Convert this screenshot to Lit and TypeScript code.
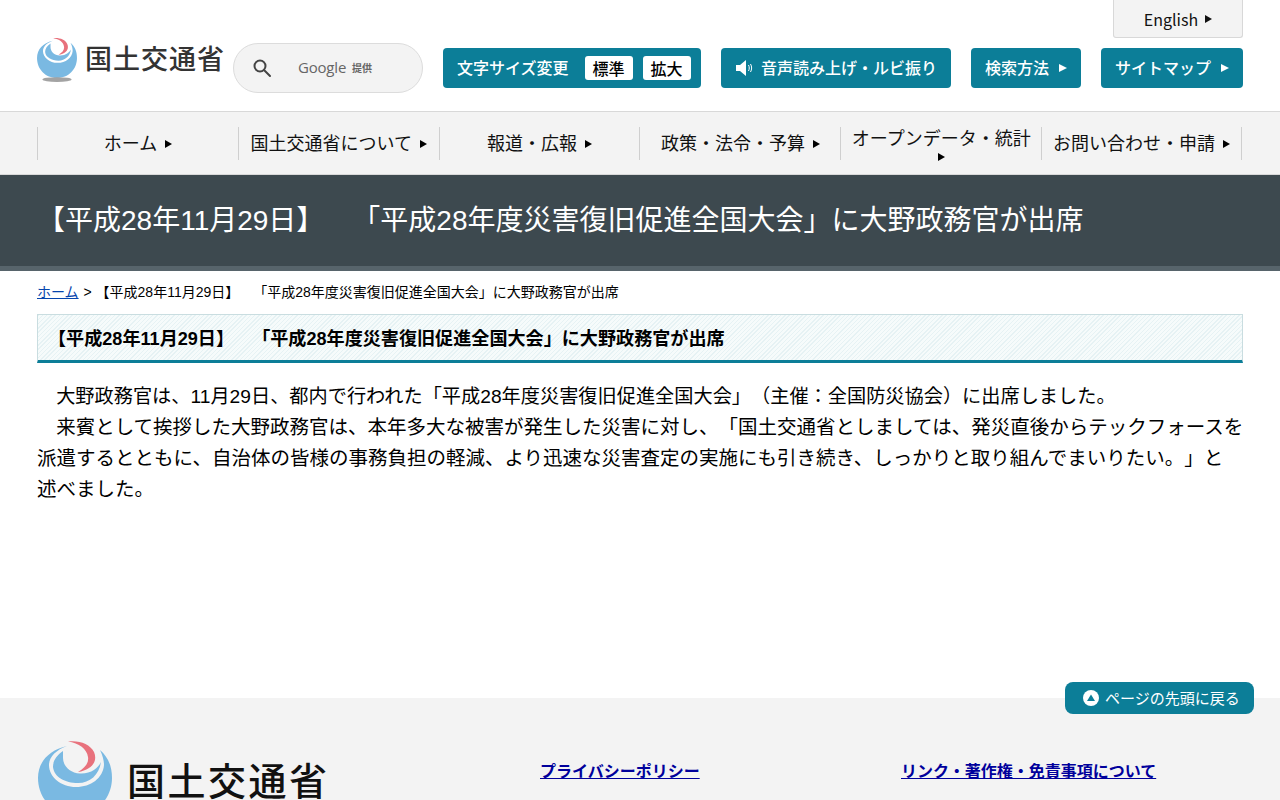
import { LitElement, html, css, svg } from "lit";
import { customElement } from "lit/decorators.js";

const markShapes = svg`
  <path fill="#7ab9e2" d="M29 5C11 9 0 21 0 37c0 21 16 37 37 37s37-16 37-37c0-12-4-21-12-28 3 6 4 11 4 15-1 13-13 22-28 22S11 36 11 24c0-8 7-15 18-19Z"/>
  <path fill="#7ab9e2" d="M25 10c-7 5-10 10-10 16 1 10 12 16 25 16 12 0 21-8 23-21-3 6-10 12-21 11.500C32 32 25 25 25 17c0-3 0-5 0-7Z"/>
  <path fill="#e8717c" d="M30 .5C41-1 52 3 56 11c4 9-2 18-16 20 7-4 11-9 10-15C49 8 41 2 30 .5Z"/>`;

const tri = html`<i class="tri"></i>`;

@customElement("app-root")
export class AppRoot extends LitElement {
  static styles = css`
    :host {
      display: block;
      height: 800px;
      overflow: hidden;
      position: relative;
      font-family: "Liberation Sans", "Noto Sans CJK JP", sans-serif;
      text-spacing-trim: space-all;
      color: #000;
      background: #fff;
    }
    * { box-sizing: border-box; }
    .noto { font-family: "Noto Sans CJK JP", sans-serif; }
    .tri {
      display: inline-block;
      width: 0;
      height: 0;
      border-left: 7px solid currentColor;
      border-top: 4px solid transparent;
      border-bottom: 4px solid transparent;
      font-style: normal;
      vertical-align: 2px;
    }
    header {
      height: 112px;
      border-bottom: 1px solid #d8d8d8;
      padding: 0 37px;
      display: flex;
      flex-direction: column;
      align-items: flex-end;
    }
    .english {
      width: 130px;
      height: 38px;
      background: #f3f3f3;
      border: 1px solid #d8d8d8;
      border-top: 0;
      border-radius: 0 0 3px 3px;
      display: flex;
      align-items: center;
      justify-content: center;
      gap: 7px;
      font-size: 16px;
      color: #111;
    }
    .head-row {
      align-self: stretch;
      height: 73px;
      display: flex;
      align-items: flex-start;
    }
    .logo {
      display: flex;
      align-items: flex-start;
      width: 196px;
      height: 46px;
      flex: none;
    }
    .mini { width: 40px; height: 44px; flex: none; }
    .logo span {
      font-size: 27px;
      font-weight: 500;
      line-height: 40px;
      color: #333;
      letter-spacing: 1px;
      white-space: nowrap;
      margin-left: 8px;
    }
    .search {
      width: 190px;
      height: 50px;
      margin-top: 5px;
      border: 1px solid #dcdcdc;
      border-radius: 25px;
      background: #f3f3f3;
      display: flex;
      align-items: center;
      padding: 0 0 2px 18px;
      flex: none;
    }
    .search svg { width: 20px; height: 20px; flex: none; margin-top: 2px; }
    .google {
      margin-left: 26px;
      font: 15px "Open Sans", sans-serif;
      color: #666;
      letter-spacing: -0.2px;
    }
    .prov {
      margin-left: 6px;
      font-size: 10px;
      font-weight: 700;
      color: #666;
    }
    .tools {
      display: flex;
      gap: 20px;
      margin-left: 20px;
      margin-top: 10px;
    }
    .btn {
      height: 40px;
      background: #0c7e98;
      color: #fff;
      border-radius: 4px;
      display: flex;
      align-items: center;
      justify-content: center;
      font-size: 16px;
      font-weight: 500;
      gap: 10px;
      white-space: nowrap;
      padding-bottom: 2px;
    }
    .btn .tri { vertical-align: baseline; margin-top: 2px; border-left-width: 8px; border-top-width: 4.500px; border-bottom-width: 4.500px; }
    .size { width: 258px; gap: 10px; justify-content: flex-start; padding-left: 14px; }
    .size > span:first-child { margin-right: 6px; }
    .chip {
      width: 48px;
      height: 24px;
      background: #fff;
      color: #000;
      border-radius: 3px;
      display: flex;
      align-items: center;
      justify-content: center;
      margin-top: 2px;
      padding-bottom: 1px;
    }
    .voice { width: 230px; gap: 8px; }
    .voice svg { width: 18px; height: 18px; flex: none; margin-top: 2px; }
    .how { width: 110px; }
    .map { width: 142px; }

    nav {
      height: 63px;
      background: #f3f3f3;
      padding: 15px 38px 0 37px;
      display: grid;
      grid-template-columns: repeat(6, 1fr);
      align-items: start;
      border-bottom: 1px solid #d9d9d9;
    }
    .item {
      height: 33px;
      border-left: 1px solid #cfcfcf;
      font-size: 18px;
      line-height: 25px;
      color: #111;
      text-align: center;
      display: block;
      padding: 3px 6px 0;
    }
    .item:last-child { border-right: 1px solid #cfcfcf; }
    .item .tri { margin-left: 8px; color: #000; }
    .item.wrap { padding-top: 0; line-height: 21px; }
    .item.wrap .tri { display: block; margin: 5px auto 0; position: relative; left: 0; }

    .title {
      height: 96px;
      background: #3d494f;
      border-bottom: 5px solid #57646b;
      color: #fff;
      font-size: 28px;
      line-height: 1.3;
      padding: 28px 37px 0;
      white-space: nowrap;
    }
    .crumb {
      padding: 13px 37px 0;
      font-size: 14px;
      line-height: 17px;
      white-space: pre;
    }
    .crumb a { color: #0645ad; margin-right: 1px; }
    h2 {
      margin: 13px 37px 0;
      height: 49px;
      border: 1px solid #c9dde0;
      border-bottom: 3px solid #0c7e98;
      background: repeating-linear-gradient(135deg, #e6f2f4 0 1px, #f6fbfb 1px 3px);
      font-size: 18.100px;
      line-height: 48px;
      padding-left: 10px;
      white-space: pre;
    }
    .body {
      margin: 18px 37px 0;
      font-size: 19.200px;
      line-height: 31px;
    }
    .body p { margin: 0; text-indent: 1em; }
    .body p + p { font-size: 19.500px; text-indent: 19.200px; margin-right: -4px; }
    footer {
      position: absolute;
      left: 0;
      right: 0;
      top: 698px;
      height: 200px;
      background: #f3f3f3;
    }
    .foot-row { display: flex; padding: 0 37px; }
    .foot-logo { display: flex; gap: 15px; width: 503px; flex: none; padding-top: 43px; padding-left: 1px; }
    .mark { width: 74px; height: 74px; flex: none; }
    .foot-logo span {
      font-size: 38px;
      font-weight: 500;
      line-height: 44px;
      letter-spacing: 2.500px;
      color: #111;
      margin-top: 16px;
      white-space: nowrap;
    }
    .foot-links {
      padding-top: 61px;
      width: 361px;
      flex: none;
      font-size: 16px;
      font-weight: 700;
      line-height: 22px;
    }
    .foot-links a { color: #00009c; }
    .top {
      position: absolute;
      left: 1065px;
      top: 682px;
      width: 189px;
      height: 32px;
      background: #0c7e98;
      border-radius: 8px;
      color: #fff;
      font-size: 15px;
      display: flex;
      align-items: center;
      gap: 6px;
      padding: 0 0 2px 18px;
      white-space: nowrap;
    }
    .top svg { width: 16px; height: 16px; flex: none; margin-top: 2px; }
  `;

  render() {
    const t = "【平成28年11月29日】　「平成28年度災害復旧促進全国大会」に大野政務官が出席";
    return html`
      <header class="noto">
        <div class="english">English ${tri}</div>
        <div class="head-row">
          <div class="logo">
            <svg class="mini" viewBox="0 0 74 81.500" aria-hidden="true">
              ${markShapes}
              <ellipse cx="37" cy="77" rx="27" ry="4.500" fill="#a3a3a3"/>
            </svg>
            <span>国土交通省</span>
          </div>
          <div class="search">
            <svg viewBox="0 0 20 20" fill="none" stroke="#444" stroke-width="2"><circle cx="8" cy="8" r="5.500"/><path d="M12 12l6 6" stroke-linecap="round"/></svg>
            <span class="google">Google</span><span class="prov">提供</span>
          </div>
          <div class="tools">
            <div class="btn size"><span>文字サイズ変更</span><span class="chip">標準</span><span class="chip">拡大</span></div>
            <div class="btn voice">
              <svg viewBox="0 0 18 18"><path fill="#fff" d="M1 6h4l6-5v16l-6-5H1z"/><path fill="none" stroke="#fff" stroke-width="1" d="M13.500 6c1 2 1 4 0 6M15.500 5c1.500 2.500 1.500 5.500 0 8"/></svg>
              <span>音声読み上げ・ルビ振り</span>
            </div>
            <div class="btn how">検索方法 ${tri}</div>
            <div class="btn map">サイトマップ ${tri}</div>
          </div>
        </div>
      </header>
      <nav class="noto">
        <div class="item">ホーム${tri}</div>
        <div class="item">国土交通省について${tri}</div>
        <div class="item">報道・広報${tri}</div>
        <div class="item">政策・法令・予算${tri}</div>
        <div class="item wrap">オープンデータ・統計${tri}</div>
        <div class="item">お問い合わせ・申請${tri}</div>
      </nav>
      <div class="title">${t}</div>
      <div class="crumb"><a href="#">ホーム</a> &gt; ${t}</div>
      <h2>${t}</h2>
      <div class="body">
        <p>大野政務官は、11月29日、都内で行われた「平成28年度災害復旧促進全国大会」（主催：全国防災協会）に出席しました。</p>
        <p>来賓として挨拶した大野政務官は、本年多大な被害が発生した災害に対し、「国土交通省としましては、発災直後からテックフォースを派遣するとともに、自治体の皆様の事務負担の軽減、より迅速な災害査定の実施にも引き続き、しっかりと取り組んでまいりたい。」と<br>述べました。</p>
      </div>
      <footer class="noto">
        <div class="foot-row">
          <div class="foot-logo">
            <svg class="mark" viewBox="0 0 74 74" aria-hidden="true">${markShapes}</svg>
            <span>国土交通省</span>
          </div>
          <div class="foot-links"><a href="#">プライバシーポリシー</a></div>
          <div class="foot-links"><a href="#">リンク・著作権・免責事項について</a></div>
        </div>
      </footer>
      <div class="top noto">
        <svg viewBox="0 0 16 16"><circle cx="8" cy="8" r="8" fill="#fff"/><path d="M8 4.500l4 6.500H4z" fill="#0c7e98"/></svg>
        ページの先頭に戻る
      </div>
    `;
  }
}
